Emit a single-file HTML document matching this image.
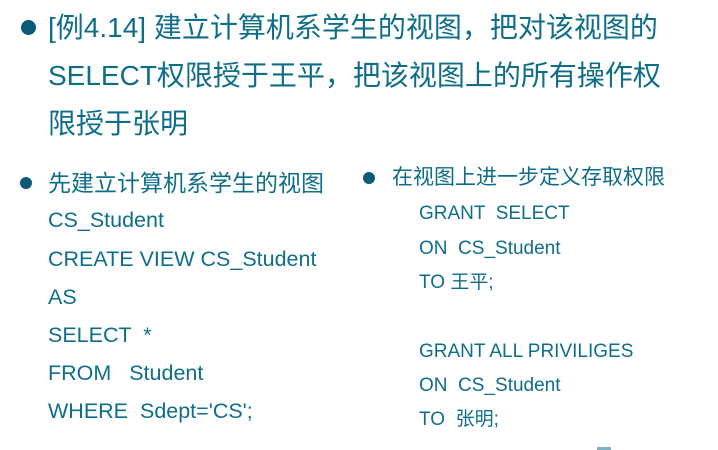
<!DOCTYPE html>
<html><head><meta charset="utf-8"><style>
body{margin:0;width:718px;height:450px;background:#fff;position:relative;overflow:hidden;font-family:"Liberation Sans","Noto Sans CJK SC",sans-serif;color:#0e6e8a}
.t{position:absolute;white-space:pre;line-height:1}
.b{position:absolute;border-radius:50%;background:#0b5b78}
</style></head><body>
<div class="b" style="left:21px;top:20px;width:15px;height:15px"></div>
<div class="t" style="left:48px;top:14px;font-size:28px">[例4.14] 建立计算机系学生的视图，把对该视图的</div>
<div class="t" style="left:48px;top:62px;font-size:28px">SELECT权限授于王平，把该视图上的所有操作权</div>
<div class="t" style="left:48px;top:110px;font-size:28px">限授于张明</div>

<div class="b" style="left:20px;top:177px;width:12px;height:12px"></div>
<div class="t" style="left:48px;top:172px;font-size:23px">先建立计算机系学生的视图</div>
<div class="t" style="left:48px;top:210px;font-size:21.5px">CS_Student</div>
<div class="t" style="left:48px;top:249px;font-size:21.5px">CREATE VIEW CS_Student</div>
<div class="t" style="left:48px;top:287px;font-size:21.5px">AS</div>
<div class="t" style="left:48px;top:325px;font-size:21.5px">SELECT  *</div>
<div class="t" style="left:48px;top:363px;font-size:21.5px">FROM   Student</div>
<div class="t" style="left:48px;top:401px;font-size:21.5px">WHERE  Sdept='CS';</div>

<div class="b" style="left:363px;top:172px;width:12px;height:12px"></div>
<div class="t" style="left:392px;top:167px;font-size:21px">在视图上进一步定义存取权限</div>
<div class="t" style="left:419px;top:204px;font-size:19px">GRANT  SELECT</div>
<div class="t" style="left:419px;top:239px;font-size:19px">ON  CS_Student</div>
<div class="t" style="left:419px;top:273px;font-size:19px">TO 王平;</div>
<div class="t" style="left:419px;top:342px;font-size:19px">GRANT ALL PRIVILIGES</div>
<div class="t" style="left:419px;top:376px;font-size:19px">ON  CS_Student</div>
<div class="t" style="left:419px;top:410px;font-size:19px">TO  张明;</div>
<div style="position:absolute;left:597px;top:447px;width:14px;height:3px;background:#7fb0c0"></div>
</body></html>
